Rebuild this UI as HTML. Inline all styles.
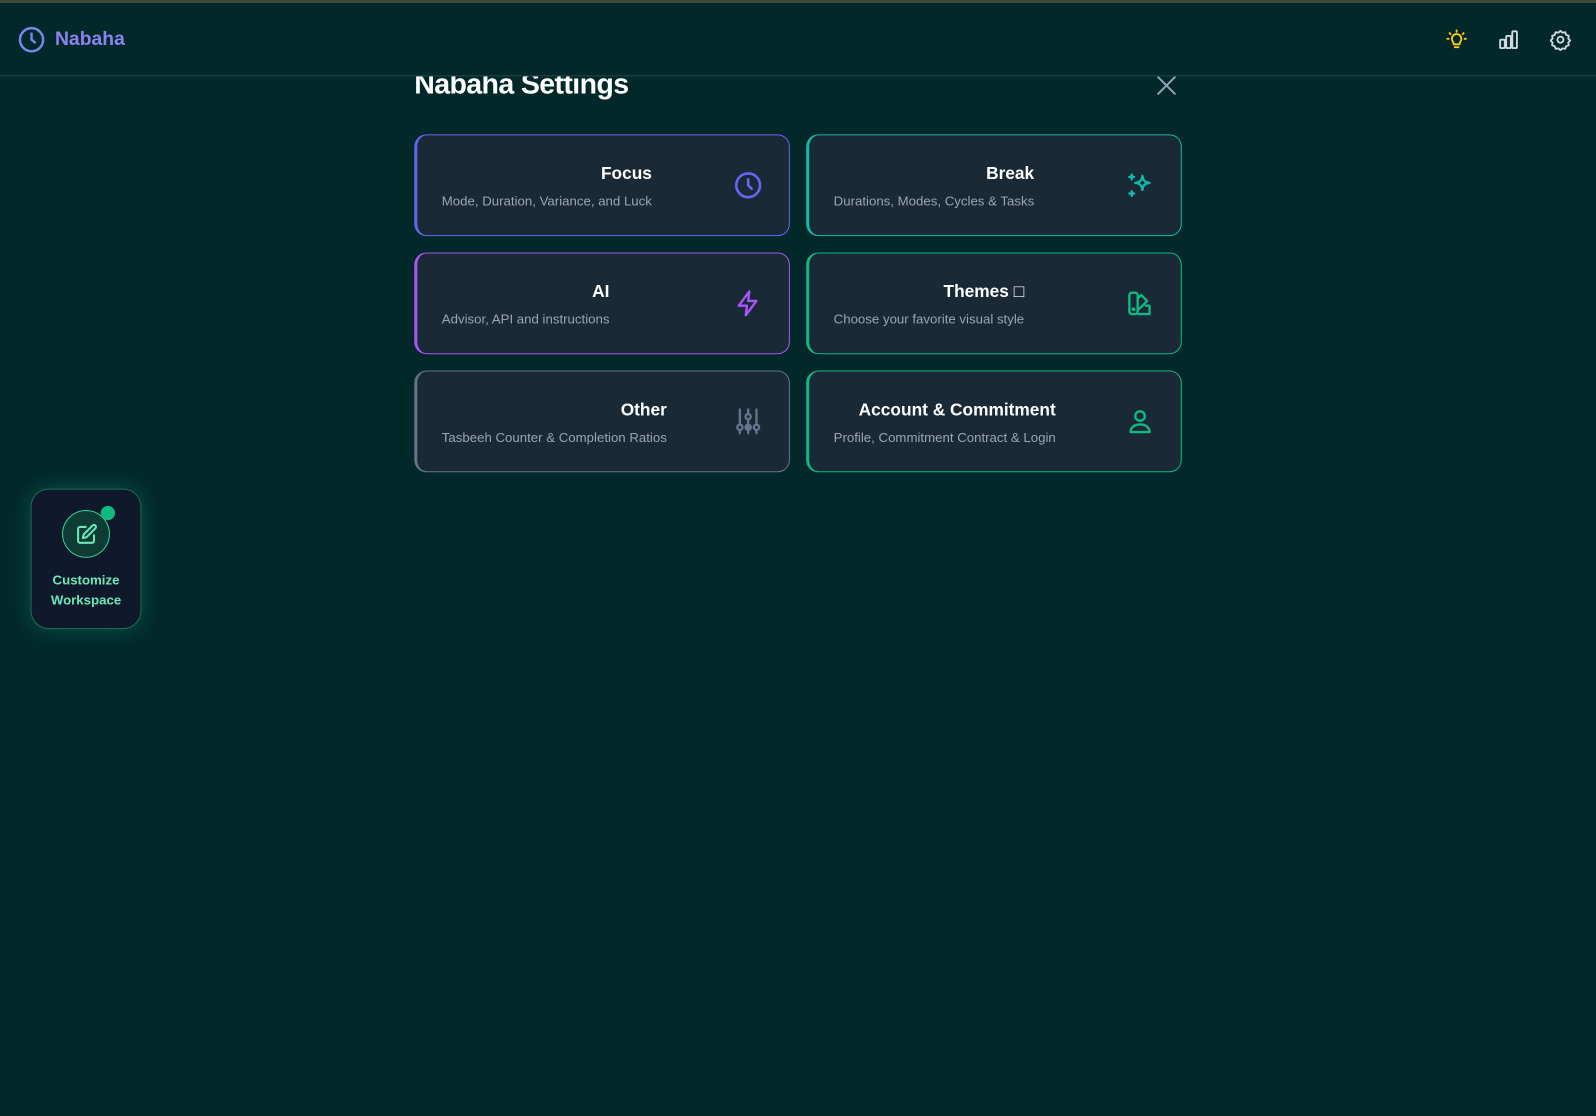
<!DOCTYPE html>
<html><head><meta charset="utf-8"><style>
*{margin:0;padding:0;box-sizing:border-box}
body{width:1596px;height:1115px;background:#03282a;font-family:"Liberation Sans",sans-serif;position:relative;overflow:hidden;color:#fff}
#w{position:absolute;left:0;top:0;width:1568px;height:1096px;transform:scale(1.0179);transform-origin:0 0}
.topline{position:absolute;top:0;left:0;right:-40px;height:3px;background:#3d4a34}
.hdr{position:absolute;top:3px;left:0;right:-40px;height:72px;background:#03282a;border-bottom:1px solid #1f4a4a;z-index:2}
.logo{position:absolute;left:18px;top:23px;display:flex;align-items:center;gap:10px}
.logo span{font-size:19px;font-weight:bold;color:#8b84f0}
.hi{position:absolute;top:25px}
.title{position:absolute;left:407px;top:67px;font-size:28px;font-weight:bold;z-index:1;letter-spacing:-0.6px}
.close{position:absolute;left:1136px;top:74px}
.card{position:absolute;width:369px;height:100px;background:#192935;border-radius:12px;border:1px solid;border-left-width:3px}
.txt{position:absolute;left:24px;top:28px;text-align:right}
.txt b{display:block;font-size:17px;margin-bottom:9px}
.txt i{display:block;font-style:normal;font-size:13px;color:#9aa6b2}
.ic{position:absolute;right:26px;top:35px}
.ws{position:absolute;left:30px;top:480px;width:109px;height:138px;background:#10192b;border:1px solid #1b6b57;border-radius:18px;box-shadow:0 0 22px rgba(16,185,129,.3);text-align:center}
.ws .c{position:absolute;left:30px;top:20px;width:47px;height:47px;border-radius:50%;border:1px solid #34d399;background:#0e3c35}
.ws .dot{position:absolute;left:68px;top:16px;width:14px;height:14px;border-radius:50%;background:#10b981}
.ws p{position:absolute;top:79px;left:0;right:0;font-size:13px;font-weight:bold;color:#6ee7b7;line-height:20px}
</style></head><body><div id="w">
<div class="topline"></div>
<div class="hdr">
 <div class="logo"><svg width="26" height="26" viewBox="0 0 24 24" fill="none" stroke="#7c84f0" stroke-width="2.2" stroke-linecap="round"><circle cx="12" cy="12" r="10.5"/><path d="M12 6.5v5.5l3 2.5"/></svg><span>Nabaha</span></div>
 <svg class="hi" style="left:1420px" width="22" height="22" viewBox="0 0 24 24" fill="none" stroke="#facc15" stroke-width="2" stroke-linecap="round"><path d="M12 2v1.5M4.5 5l1 1M19.5 5l-1 1M2 11h1.5M20.5 11H22"/><path d="M9 17c0-2-2-3-2-6a5 5 0 0110 0c0 3-2 4-2 6z"/><path d="M10 20h4"/></svg>
 <svg class="hi" style="left:1471px" width="22" height="22" viewBox="0 0 24 24" fill="none" stroke="#d1d9e0" stroke-width="2" stroke-linejoin="round"><rect x="3" y="12" width="5" height="9" rx="1"/><rect x="9.5" y="8" width="5" height="13" rx="1"/><rect x="16" y="3" width="5" height="18" rx="1"/></svg>
 <svg class="hi" style="left:1522px" width="22" height="22" viewBox="0 0 24 24" fill="none" stroke="#d1d9e0" stroke-width="2" stroke-linejoin="round"><path d="M12 2.5l2.2 2 2.9-.5 1 2.8 2.8 1-.5 2.9 2 2.2-2 2.2.5 2.9-2.8 1-1 2.8-2.9-.5-2.2 2-2.2-2-2.9.5-1-2.8-2.8-1 .5-2.9-2-2.2 2-2.2-.5-2.9 2.8-1 1-2.8 2.9.5z"/><circle cx="12" cy="12" r="3.2"/></svg>
</div>
<div class="title">Nabaha Settings</div>
<svg class="close" width="20" height="20" viewBox="0 0 22 22" stroke="#94a3b8" stroke-width="2.2" stroke-linecap="round"><path d="M2 2l18 18M20 2L2 20"/></svg>

<div class="card" style="left:407px;top:132px;border-color:#6366f1"><div class="txt"><b>Focus</b><i>Mode, Duration, Variance, and Luck</i></div>
<svg class="ic" width="28" height="28" viewBox="0 0 24 24" fill="none" stroke="#6366f1" stroke-width="2.2" stroke-linecap="round"><circle cx="12" cy="12" r="10"/><path d="M12 7v5l3 3"/></svg></div>
<div class="card" style="left:792px;top:132px;border-color:#14b8a6"><div class="txt"><b>Break</b><i>Durations, Modes, Cycles &amp; Tasks</i></div>
<svg class="ic" width="28" height="28" viewBox="0 0 24 24" fill="none" stroke="#14b8a6" stroke-width="2" stroke-linejoin="round" stroke-linecap="round"><path d="M14 4c.5 4 2 5.5 6 6-4 .5-5.5 2-6 6-.5-4-2-5.5-6-6 4-.5 5.5-2 6-6z"/><path d="M5 3v4M3 5h4M5 17v4M3 19h4"/></svg></div>
<div class="card" style="left:407px;top:248px;border-color:#a855f7"><div class="txt"><b>AI</b><i>Advisor, API and instructions</i></div>
<svg class="ic" width="28" height="28" viewBox="0 0 24 24" fill="none" stroke="#a855f7" stroke-width="2" stroke-linejoin="round"><path d="M13 2L4 14h7l-1 8 9-12h-7z"/></svg></div>
<div class="card" style="left:792px;top:248px;border-color:#10b981"><div class="txt"><b>Themes □</b><i>Choose your favorite visual style</i></div>
<svg class="ic" width="28" height="28" viewBox="0 0 24 24" fill="none" stroke="#10b981" stroke-width="2" stroke-linejoin="round"><rect x="3" y="3" width="7" height="18" rx="2"/><path d="M10 8l3-3 5 5-8 8M10 21h10v-7h-4"/><circle cx="6.5" cy="17" r=".6" fill="#10b981"/></svg></div>
<div class="card" style="left:407px;top:364px;border-color:#64748b"><div class="txt"><b>Other</b><i>Tasbeeh Counter &amp; Completion Ratios</i></div>
<svg class="ic" width="28" height="28" viewBox="0 0 24 24" fill="none" stroke="#64748b" stroke-width="2" stroke-linecap="round"><path d="M5 2v20M12 2v20M19 2v20"/><circle cx="5" cy="17" r="2.2" fill="#192935"/><circle cx="12" cy="8" r="2.2" fill="#192935"/><circle cx="19" cy="17" r="2.2" fill="#192935"/><circle cx="12" cy="17" r="2.2" fill="#64748b"/></svg></div>
<div class="card" style="left:792px;top:364px;border-color:#10b981"><div class="txt"><b>Account &amp; Commitment</b><i>Profile, Commitment Contract &amp; Login</i></div>
<svg class="ic" width="28" height="28" viewBox="0 0 24 24" fill="none" stroke="#10b981" stroke-width="2"><circle cx="12" cy="7.5" r="4"/><path d="M4 21c0-4 3.5-6.5 8-6.5s8 2.5 8 6.5z" stroke-linejoin="round"/></svg></div>

<div class="ws"><div class="c"><svg style="position:absolute;left:12px;top:12px" width="22" height="22" viewBox="0 0 24 24" fill="none" stroke="#6ee7b7" stroke-width="2.2" stroke-linejoin="round" stroke-linecap="round"><path d="M11 4H5a2 2 0 00-2 2v13a2 2 0 002 2h13a2 2 0 002-2v-6"/><path d="M18.5 2.5a2.1 2.1 0 013 3L12 15l-4 1 1-4z"/></svg></div><div class="dot"></div><p>Customize<br>Workspace</p></div>
</div></body></html>
